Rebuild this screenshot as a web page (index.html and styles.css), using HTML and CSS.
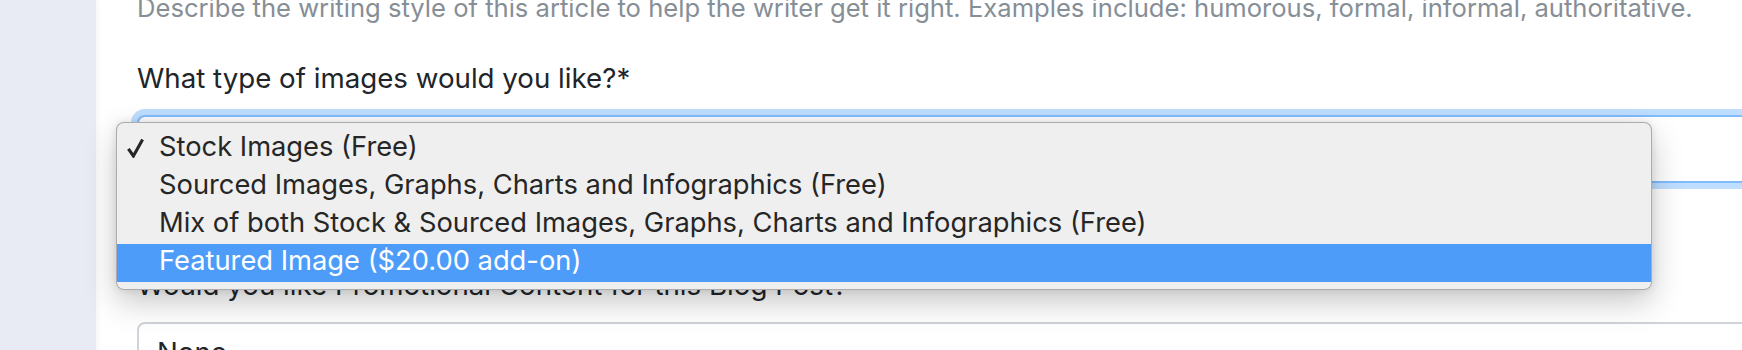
FILE: index.html
```html
<!DOCTYPE html>
<html lang="en">
<head>
    <meta charset="UTF-8">
    <meta name="viewport" content="width=device-width, initial-scale=1.0">
    <title>Blog Post Order</title>
    <link rel="stylesheet" href="styles.css">
</head>
<body>
    <div class="page">
        <aside class="sidebar"></aside>

        <main class="content">
            <p class="help-text">Describe the writing style of this article to help the writer get it right. Examples include: humorous, formal, informal, authoritative.</p>

            <div class="form-group">
                <label class="form-label">What type of images would you like?*</label>
                <div class="select-wrap">
                    <div class="select is-focused"></div>

                    <!-- open native-style popup -->
                    <ul class="menu">
                        <li class="menu-item is-checked">
                            <span class="check">
                                <svg viewBox="0 0 17 20" fill="none" stroke="currentColor">
                                    <path d="M1.4 10.8 L6.4 18 L15.6 1.6" stroke-width="3.1" />
                                </svg>
                            </span>
                            Stock Images (Free)
                        </li>
                        <li class="menu-item"><span class="check"></span>Sourced Images, Graphs, Charts and Infographics (Free)</li>
                        <li class="menu-item"><span class="check"></span>Mix of both Stock &amp; Sourced Images, Graphs, Charts and Infographics (Free)</li>
                        <li class="menu-item is-active"><span class="check"></span>Featured Image ($20.00 add-on)</li>
                    </ul>
                </div>
            </div>

            <div class="form-group">
                <label class="form-label">Would you like Promotional Content for this Blog Post?</label>
                <div class="select">None</div>
            </div>
        </main>
    </div>
</body>
</html>
```
FILE: styles.css
```css
:root {
    --clr-sidebar: #e8ebf3;
    --clr-text: #212529;
    --clr-muted: #868e96;
    --clr-border: #ced4da;
    --clr-focus: #80bdff;
    --clr-menu: #efefef;
    --clr-menu-text: #262626;
    --clr-highlight: #4d9cfa;
    --radius: 8px;
}

* {
    margin: 0;
    padding: 0;
    box-sizing: border-box;
}

html, body {
    height: 100%;
    overflow: hidden;
}

body {
    font-family: 'Inter', 'Liberation Sans', sans-serif;
    color: var(--clr-text);
    background: #ffffff;
}

.page {
    display: flex;
    min-height: 100%;
}

.sidebar {
    flex: 0 0 96px;
    background: var(--clr-sidebar);
    box-shadow: 2px 0 4px rgba(40, 50, 80, 0.05);
    position: relative;
    z-index: 1;
}

.content {
    flex: 1;
    padding-left: 41px;
    min-width: 0;
}

.help-text {
    font-size: 25.6px;
    line-height: 36px;
    color: var(--clr-muted);
    white-space: nowrap;
    margin: -10px 0 32px;
}

.form-group {
    width: 1640px;
    margin-bottom: 82px;
}

.form-label {
    display: block;
    font-size: 27.7px;
    line-height: 40px;
    margin-bottom: 17px;
    white-space: nowrap;
}

.select-wrap {
    position: relative;
}

.select {
    height: 68px;
    padding: 8px 18px 0;
    border: 2px solid var(--clr-border);
    border-radius: var(--radius);
    background: #ffffff;
    font-size: 27.7px;
    line-height: 40px;
    color: var(--clr-text);
}

.select.is-focused {
    border-color: var(--clr-focus);
    box-shadow: 0 0 0 6px rgba(0, 123, 255, 0.25);
}

/* popup list */
.menu {
    position: absolute;
    top: 7px;
    left: -21px;
    width: 1536px;
    padding: 7px 0;
    list-style: none;
    background: var(--clr-menu);
    border: 1px solid rgba(0, 0, 0, 0.28);
    border-radius: var(--radius);
    box-shadow: 0 0 8px rgba(0, 0, 0, 0.1), 0 12px 32px rgba(0, 0, 0, 0.22);
    z-index: 2;
}

.menu-item {
    display: flex;
    align-items: center;
    height: 38px;
    padding: 0 0 4px 10px;
    font-size: 27.3px;
    line-height: 34px;
    color: var(--clr-menu-text);
    white-space: nowrap;
}

.menu-item.is-active {
    background: var(--clr-highlight);
    color: #ffffff;
}

.check {
    flex: 0 0 32px;
    display: flex;
    align-items: center;
    height: 34px;
}

.check svg {
    width: 17px;
    height: 20px;
    margin-top: 1px;
}
```
